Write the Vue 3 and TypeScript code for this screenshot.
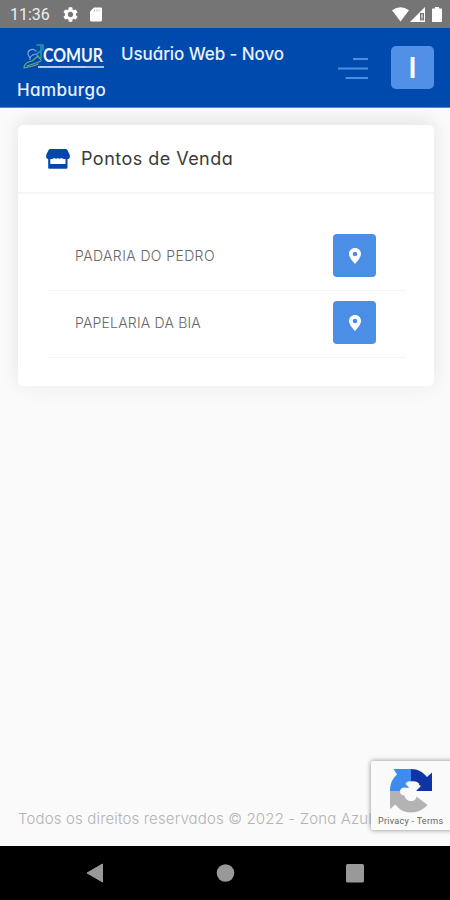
<script setup lang="ts">
interface SalePoint {
  id: number
  name: string
}

const points: SalePoint[] = [
  { id: 1, name: 'PADARIA DO PEDRO' },
  { id: 2, name: 'PAPELARIA DA BIA' },
]
</script>

<template>
  <div class="screen">
    <div class="status">
      <span class="clock">11:36</span>
      <svg class="gear" width="15" height="15" viewBox="2 2 20 20" fill="#fff">
        <path d="M19.14 12.94c.04-.3.06-.61.06-.94 0-.32-.02-.64-.07-.94l2.03-1.58c.18-.14.23-.41.12-.61l-1.92-3.32c-.12-.22-.37-.29-.59-.22l-2.39.96c-.5-.38-1.03-.7-1.62-.94l-.36-2.54c-.04-.24-.24-.41-.48-.41h-3.84c-.24 0-.43.17-.47.41l-.36 2.54c-.59.24-1.13.57-1.62.94l-2.39-.96c-.22-.08-.47 0-.59.22L2.74 8.87c-.12.21-.08.47.12.61l2.03 1.58c-.05.3-.09.63-.09.94s.02.64.07.94l-2.03 1.58c-.18.14-.23.41-.12.61l1.92 3.32c.12.22.37.29.59.22l2.39-.96c.5.38 1.03.7 1.62.94l.36 2.54c.05.24.24.41.48.41h3.84c.24 0 .44-.17.47-.41l.36-2.54c.59-.24 1.13-.56 1.62-.94l2.39.96c.22.08.47 0 .59-.22l1.92-3.32c.12-.22.07-.47-.12-.61l-2.01-1.58zM12 15.6c-1.98 0-3.6-1.62-3.6-3.6s1.62-3.6 3.6-3.6 3.6 1.62 3.6 3.6-1.62 3.6-3.6 3.6z" />
      </svg>
      <svg class="sd" width="12" height="15" viewBox="0 0 12 15">
        <path fill="#fff" d="M4 .5h6.800c.7 0 1.200.5 1.200 1.200v11.600c0 .7-.5 1.200-1.200 1.200H1.200C.5 14.500 0 14 0 13.300V4.500z" />
        <path stroke="#bbb" d="M4.500 2.500v2M6.800 2.500v2M9.100 2.500v2" />
      </svg>
      <svg class="signals" width="51" height="16" viewBox="0 0 51 16" fill="#fff">
        <path d="M0 3.200Q8.500-2.800 17 3.200L8.500 14.500z" />
        <path d="M33 0v15H18z" />
        <path fill="#757575" d="M28 6h4v7.500h-4z" />
        <path d="M29.500 7h1v4.500h-1zM29.500 12.400h1v1h-1z" />
        <path d="M43 0h4v1.500h2c.6 0 1 .4 1 1V14c0 .6-.4 1-1 1h-8c-.6 0-1-.4-1-1V2.500c0-.6.4-1 1-1h2z" />
      </svg>
    </div>

    <header class="topbar">
      <div class="brand">
        <svg class="logo" width="84" height="30" viewBox="0 0 84 30">
          <g fill="none" stroke-linecap="round" stroke-linejoin="round">
            <path stroke="#7fa6df" stroke-width="1.100" d="M13 11C10 8 5 9.500 5 13.500c0 3 3 3.500 2 6M7 18c1.500-3 4-4 7-4" />
            <path stroke="#279aa8" stroke-width="1.500" d="M14 5h6v5M18 5v12M17 12c-4 0-4 6 1 6" />
            <path stroke="#69a982" stroke-width="1.200" d="M1 27c1-4 4-5.500 8-6l6-5 3 4M4 26l9-3 5-2M1 28l9-2 5-2" />
          </g>
          <text class="logo-name" x="20" y="21.500" textLength="60" lengthAdjust="spacingAndGlyphs">COMUR</text>
          <path stroke="#a6c0e8" stroke-width="1.800" d="M15 27h66" />
          <path stroke="#dbe6f7" stroke-width=".8" stroke-dasharray="3 .8" d="M17 26.800h46" />
        </svg>
        <span class="title-first">Usuário Web - Novo</span>
        <span class="title-second">Hamburgo</span>
      </div>
      <svg class="menu" width="30" height="22" viewBox="0 0 30 22">
        <path stroke="#4b8fe5" stroke-width="1.800" d="M15 1h15M0 10.500h30M7.500 20h22.500" />
      </svg>
      <button class="avatar">I</button>
    </header>

    <main class="content">
      <section class="card">
        <div class="card-head">
          <svg width="24" height="20" viewBox="0 0 24 20">
            <path fill="#0646ad" d="M4.500 0h15c1 0 1.500.4 2 1.200l2 4c1 2.500 0 4.800-2 4.800v8.500c0 .9-.5 1.300-1.400 1.300H3.600c-.9 0-1.400-.4-1.400-1.300V10C.3 9.800-.5 7.500.5 5.200l2-4C3 .4 3.500 0 4.500 0z" />
            <path fill="#fff" d="M4.300 10c1.500.3 3-.1 4-1 1 1.100 2.600 1.100 3.600 0 1 1.100 2.600 1.100 3.600 0 1 .9 2.500 1.300 4 1v5H4.300z" />
          </svg>
          <h1>Pontos de Venda</h1>
        </div>
        <ul class="list">
          <li v-for="point in points" :key="point.id">
            <span :class="['name', 'name-' + point.id]">{{ point.name }}</span>
            <button class="locate" aria-label="Mapa">
              <svg width="12" height="16" viewBox="0 0 12 16">
                <path fill="#fff" fill-rule="evenodd" d="M6 0C2.600 0 0 2.600 0 5.900 0 9.300 3.500 13 6 16c2.500-3 6-6.700 6-10.100C12 2.600 9.400 0 6 0zm0 3.700a2.300 2.300 0 1 1 0 4.600 2.300 2.300 0 0 1 0-4.600z" />
              </svg>
            </button>
          </li>
        </ul>
      </section>
      <footer class="footer">Todos os direitos reservados © 2022 - Zona Azul</footer>
      <aside class="captcha">
        <svg width="44" height="44" viewBox="0 0 44 44">
          <path fill="#3f8cf0" d="M22 0v12.500c-2.500-.5-4.500.3-5.500 2.500l4 4-5.500-.5c-2 0-3.500 1.500-4 3.500H1C1 14.500 3.600 9.300 8 5.500L4.500 0z" />
          <path fill="#0d35a8" d="M22 0c7 0 12 3 16 8l5-4.500V22H27l5-5c-1.500-.5-2-1-2-2.500-2-2-4.500-2.700-8-2z" />
          <path fill="#b3b3b3" d="M1 22h10c0 3 1.500 4.500 4.500 4.500 1 4 3.500 5.500 6.500 5.500 4 0 5-2 5.500-4.500l11 8.500C34.500 40.500 29 43.500 22 43.500c-7 0-12-3-15.500-8L1 40z" />
          <path fill="#fafafa" d="M15 22l5.500-4 2-4 5 4-1 4-4 3-1 7-4-4z" />
        </svg>
        <span>Privacy - Terms</span>
      </aside>
    </main>

    <nav class="navbar">
      <svg width="450" height="54" viewBox="0 0 450 54" fill="#999">
        <path stroke="#999" stroke-linejoin="round" d="M87 27l15.500-9v18z" />
        <circle cx="225.500" cy="27" r="8.800" />
        <rect x="346" y="18" width="18" height="18.500" rx="1.500" />
      </svg>
    </nav>
  </div>
</template>

<style>
body {
  margin: 0;
}
</style>

<style scoped>
.screen {
  width: 450px;
  height: 900px;
  display: flex;
  flex-direction: column;
  overflow: hidden;
  background: #fafafa;
  font-family: Inter, "Open Sans", sans-serif;
  font-feature-settings: "cv11" 1, "ss03" 1;
}
.status {
  height: 28px;
  flex: none;
  box-sizing: border-box;
  padding: 1px 7px 0 10px;
  display: flex;
  align-items: center;
  background: #757575;
}
.clock {
  width: 53px;
  font: 400 16px/28px Roboto, sans-serif;
  color: #eee;
}
.sd {
  margin-left: 12px;
}
.signals {
  margin-left: auto;
}
.topbar {
  height: 80px;
  flex: none;
  display: flex;
  background: #004aad;
  border-bottom: 1px solid #5c86c8;
  box-sizing: border-box;
  padding: 0 16px 0 17px;
  color: #e9f0fb;
}
.brand {
  width: 321px;
  display: grid;
  grid-template-columns: 104px 1fr;
  grid-template-rows: 44px 36px;
  font-size: 17px;
  font-weight: 500;
  white-space: nowrap;
}
.logo {
  margin: 12px 0 0 6px;
  overflow: visible;
}
.logo-name {
  font: 700 18px Lato, sans-serif;
  fill: #f3f7fd;
}
.title-first {
  line-height: 53px;
  letter-spacing: -0.080px;
}
.title-second {
  grid-column: 1 / 3;
  line-height: 37px;
  letter-spacing: 0.370px;
}
.menu {
  margin-top: 30px;
}
.avatar {
  width: 43px;
  height: 43px;
  margin: 18px 0 0 auto;
  padding: 0;
  border: 0;
  border-radius: 5px;
  background: #5290e7;
  color: #fff;
  font: 600 29px/43px Inter, sans-serif;
}
.content {
  flex: 1;
  position: relative;
  display: flex;
  flex-direction: column;
  padding: 17px 16px 0 18px;
}
.card {
  height: 261px;
  box-sizing: border-box;
  border-radius: 5px;
  background: #fff;
  box-shadow: 0 0 22px rgba(40, 40, 50, 0.070), 0 -8px 14px rgba(40, 40, 50, 0.035);
}
.card-head {
  height: 69px;
  box-sizing: border-box;
  padding: 0 28px;
  display: flex;
  align-items: center;
  gap: 11px;
  border-bottom: 2px solid #f5f5f5;
}
h1 {
  margin: 0;
  font-size: 18px;
  font-weight: 400;
  letter-spacing: 0.470px;
  color: #3a3a3a;
  white-space: nowrap;
}
.list {
  list-style: none;
  margin: 0;
  padding: 30px 28px 0 30px;
}
.list li {
  height: 67px;
  box-sizing: border-box;
  padding: 0 30px 3px 27px;
  display: flex;
  align-items: center;
  justify-content: space-between;
  border-bottom: 1px solid #f4f4f4;
}
.name {
  font-size: 14px;
  font-weight: 300;
  color: #666;
}
.name-1 {
  letter-spacing: 0.400px;
}
.name-2 {
  letter-spacing: 0.200px;
}
.locate {
  width: 43px;
  height: 43px;
  padding: 0;
  border: 0;
  border-radius: 4px;
  display: grid;
  place-items: center;
  background: #4a8ee5;
}
.footer {
  margin: auto 0 17px;
  font-size: 15px;
  font-weight: 300;
  line-height: 20px;
  letter-spacing: 0.150px;
  color: #b3b3b3;
  white-space: nowrap;
}
.captcha {
  position: absolute;
  left: 371px;
  top: 653px;
  width: 85px;
  height: 69px;
  box-sizing: border-box;
  padding: 8px 0 0 7px;
  display: flex;
  flex-direction: column;
  border-radius: 2px;
  background: #fafafa;
  box-shadow: 0 0 5px #888;
}
.captcha svg {
  margin-left: 11px;
}
.captcha span {
  font: 9px/16px Roboto, sans-serif;
  letter-spacing: 0.280px;
  color: #666;
  white-space: nowrap;
}
.navbar {
  height: 54px;
  flex: none;
  background: #000;
}
</style>
